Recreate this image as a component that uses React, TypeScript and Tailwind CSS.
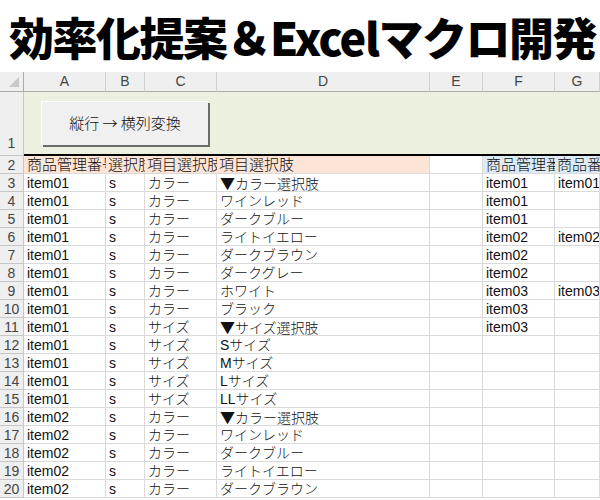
import React from "react";

const cols = ["A", "B", "C", "D", "E", "F", "G"];

type Row = { a: string; c: string; d: string; f?: string; g?: string };

const rows: Row[] = [
  { a: "item01", c: "カラー", d: "▼カラー選択肢", f: "item01", g: "item01" },
  { a: "item01", c: "カラー", d: "ワインレッド", f: "item01" },
  { a: "item01", c: "カラー", d: "ダークブルー", f: "item01" },
  { a: "item01", c: "カラー", d: "ライトイエロー", f: "item02", g: "item02" },
  { a: "item01", c: "カラー", d: "ダークブラウン", f: "item02" },
  { a: "item01", c: "カラー", d: "ダークグレー", f: "item02" },
  { a: "item01", c: "カラー", d: "ホワイト", f: "item03", g: "item03" },
  { a: "item01", c: "カラー", d: "ブラック", f: "item03" },
  { a: "item01", c: "サイズ", d: "▼サイズ選択肢", f: "item03" },
  { a: "item01", c: "サイズ", d: "Sサイズ" },
  { a: "item01", c: "サイズ", d: "Mサイズ" },
  { a: "item01", c: "サイズ", d: "Lサイズ" },
  { a: "item01", c: "サイズ", d: "LLサイズ" },
  { a: "item02", c: "カラー", d: "▼カラー選択肢" },
  { a: "item02", c: "カラー", d: "ワインレッド" },
  { a: "item02", c: "カラー", d: "ダークブルー" },
  { a: "item02", c: "カラー", d: "ライトイエロー" },
  { a: "item02", c: "カラー", d: "ダークブラウン" },
];

const cell =
  "h-[18px] border-r border-b border-[#dadada] pl-[3px] overflow-hidden whitespace-nowrap leading-[18px]";
const rowHead =
  "h-[18px] border-r border-b border-[#c6c6c6] bg-[#efefef] text-center text-[#444] text-[14px] leading-[18px] font-['Liberation_Sans',sans-serif]";

function Choice({ text }: { text: string }) {
  // the ▼ marker is full-width in the sheet font
  if (text.startsWith("▼")) {
    return (
      <>
        <span className="font-['Noto_Sans_CJK_JP',sans-serif] font-normal text-[15px]">▼</span>
        {text.slice(1)}
      </>
    );
  }
  return <>{text}</>;
}

export default function App() {
  return (
    <div className="w-[600px] h-[500px] overflow-hidden bg-white font-['Liberation_Sans','Noto_Sans_CJK_JP',sans-serif] font-light text-[14px] text-[#111]">
      {/* Title */}
      <div className="h-[72px] flex items-center pl-[9px]">
        <h1 className="text-[45px] font-black text-black tracking-[-1.5px] leading-none whitespace-nowrap font-['Noto_Sans_CJK_JP',sans-serif]">
          効率化提案＆Excelマクロ開発
        </h1>
      </div>

      <div className="grid grid-cols-[24px_82px_39px_72px_213px_53px_72px_1fr]">
        {/* Column header */}
        <div className="relative h-[20px] bg-[#efefef] border-r border-b border-[#ababab]">
          <div className="absolute right-[4px] bottom-[4px] w-0 h-0 border-l-[10px] border-l-transparent border-b-[10px] border-b-[#c9c9c9]" />
        </div>
        {cols.map((c) => (
          <div
            key={c}
            className="h-[20px] bg-[#efefef] border-r border-b border-r-[#d0d0d0] border-b-[#ababab] text-center text-[#444] text-[14px] leading-[19px]"
          >
            {c}
          </div>
        ))}

        {/* Row 1 */}
        <div className="h-[64px] border-r border-b border-[#c6c6c6] bg-[#efefef] text-center text-[#444] text-[14px] flex items-end justify-center pb-[1px]">
          1
        </div>
        <div className="col-span-7 h-[64px] bg-[#ebf1de] border-b-2 border-black pl-[17px] pt-[9px]">
          <button className="w-[167px] h-[44px] bg-[#f0f0f0] border-t border-l border-white shadow-[2px_2px_0_#6b6b6b] text-[15px] text-[#111] font-['Noto_Sans_CJK_JP',sans-serif] font-light">
            縦行 → 横列変換
          </button>
        </div>

        {/* Row 2 */}
        <div className={rowHead}>2</div>
        <div className="h-[18px] bg-[#fce4d6] border-b border-[#dadada] pl-[3px] overflow-hidden whitespace-nowrap leading-[18px] text-[15px]">
          商品管理番号
        </div>
        <div className="h-[18px] bg-[#fce4d6] border-b border-[#dadada] pl-[2px] overflow-hidden whitespace-nowrap leading-[18px] text-[15px]">
          選択肢
        </div>
        <div className="h-[18px] bg-[#fce4d6] border-b border-[#dadada] pl-[2px] overflow-hidden whitespace-nowrap leading-[18px] text-[15px]">
          項目選択肢
        </div>
        <div className="h-[18px] bg-[#fce4d6] border-r border-b border-[#dadada] pl-[2px] overflow-hidden whitespace-nowrap leading-[18px] text-[15px]">
          項目選択肢
        </div>
        <div className={cell} />
        <div className="h-[18px] bg-[#ddebf7] border-b border-[#dadada] pl-[3px] overflow-hidden whitespace-nowrap leading-[18px] text-[15px]">
          商品管理番号
        </div>
        <div className="h-[18px] bg-[#ddebf7] border-b border-[#dadada] pl-[2px] overflow-hidden whitespace-nowrap leading-[18px] text-[15px]">
          商品番号
        </div>

        {/* Data rows */}
        {rows.map((r, i) => (
          <React.Fragment key={i}>
            <div className={rowHead}>{i + 3}</div>
            <div className={cell}>{r.a}</div>
            <div className={cell}>s</div>
            <div className={cell}>{r.c}</div>
            <div className={cell}>
              <Choice text={r.d} />
            </div>
            <div className={cell} />
            <div className={cell}>{r.f ?? ""}</div>
            <div className={cell}>{r.g ?? ""}</div>
          </React.Fragment>
        ))}
      </div>
    </div>
  );
}
